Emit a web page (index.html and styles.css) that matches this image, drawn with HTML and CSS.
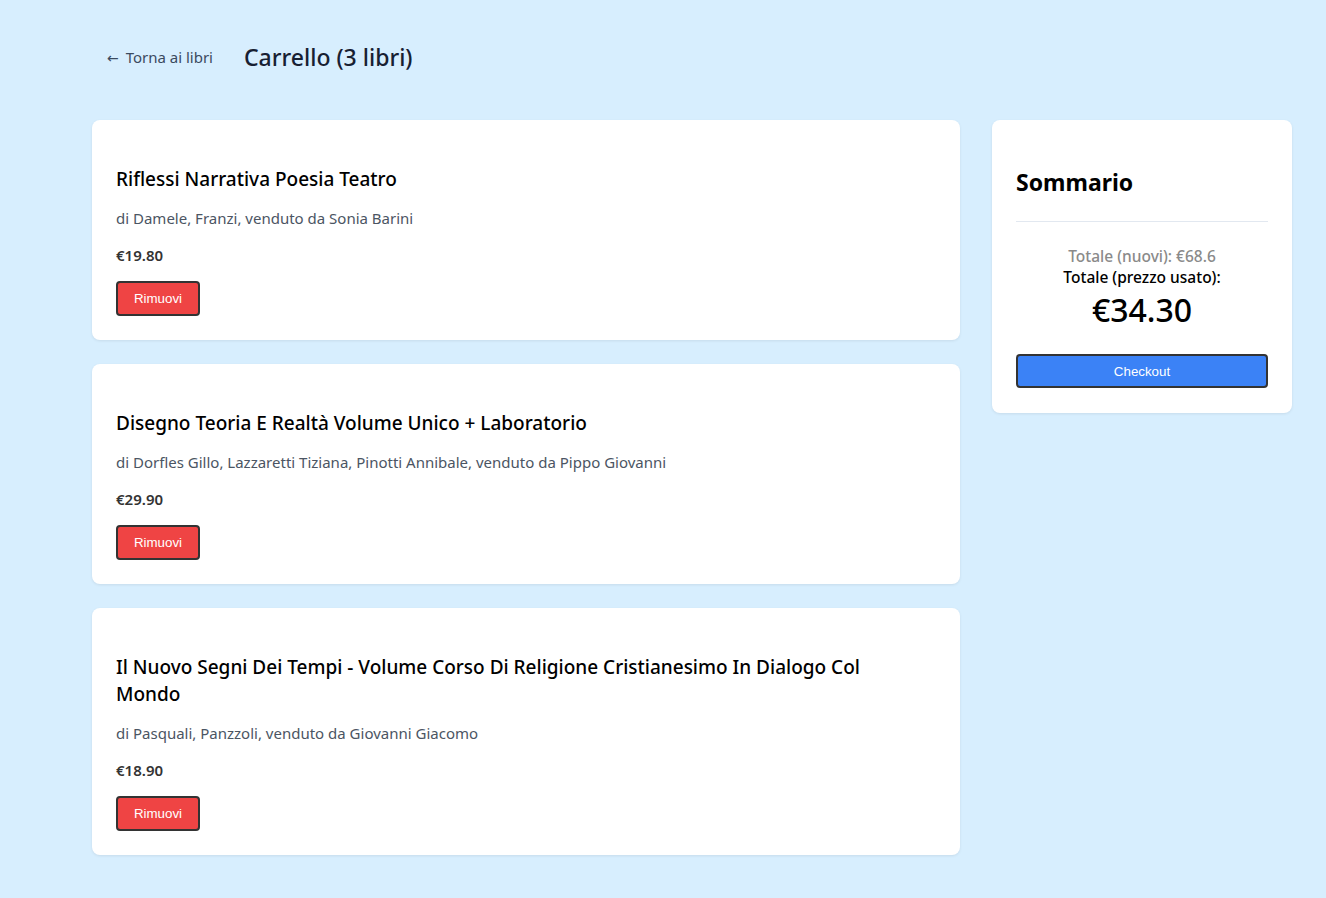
FILE: index.html
```html
<!DOCTYPE html>
<html lang="it">
<head>
<meta charset="utf-8">
<title>Carrello</title>
<link rel="stylesheet" href="styles.css">
</head>
<body>
<div class="page">
  <header class="topbar">
    <a class="back" href="#"><span class="arrow">←</span> Torna ai libri</a>
    <h1 class="title">Carrello (3 libri)</h1>
  </header>
  <div class="layout">
    <div class="items">
      <div class="card">
        <h3 class="book-title">Riflessi Narrativa Poesia Teatro</h3>
        <p class="meta">di Damele, Franzi, venduto da Sonia Barini</p>
        <p class="price">€19.80</p>
        <button class="btn btn-remove">Rimuovi</button>
      </div>
      <div class="card">
        <h3 class="book-title">Disegno Teoria E Realtà Volume Unico + Laboratorio</h3>
        <p class="meta">di Dorfles Gillo, Lazzaretti Tiziana, Pinotti Annibale, venduto da Pippo Giovanni</p>
        <p class="price">€29.90</p>
        <button class="btn btn-remove">Rimuovi</button>
      </div>
      <div class="card">
        <h3 class="book-title">Il Nuovo Segni Dei Tempi - Volume Corso Di Religione Cristianesimo In Dialogo Col Mondo</h3>
        <p class="meta">di Pasquali, Panzzoli, venduto da Giovanni Giacomo</p>
        <p class="price">€18.90</p>
        <button class="btn btn-remove">Rimuovi</button>
      </div>
    </div>
    <aside class="summary">
      <h2 class="summary-title">Sommario</h2>
      <hr class="divider">
      <div class="totals">
        <div class="total-new">Totale (nuovi): €68.6</div>
        <div class="total-used">Totale (prezzo usato):</div>
        <div class="total-amount">€34.30</div>
      </div>
      <button class="btn btn-checkout">Checkout</button>
    </aside>
  </div>
</div>
</body>
</html>
```
FILE: styles.css
```css
* { box-sizing: border-box; }
html, body {
  margin: 0;
  padding: 0;
}
body {
  background: #d7eefe;
  font-family: "Noto Sans", "Open Sans", sans-serif;
  color: #111;
  min-height: 898px;
}
.page {
  padding: 0 34px 40px 92px;
}
.topbar {
  display: flex;
  align-items: center;
  gap: 31px;
  height: 114px;
  margin-bottom: 6px;
  padding-left: 15px;
}
.back {
  font-size: 15px;
  color: #3b4a5e;
  text-decoration: none;
}
.arrow {
  font-family: "DejaVu Sans", sans-serif;
  font-size: 14px;
  margin-right: 3px;
}
.title {
  margin: 0;
  font-size: 23px;
  font-weight: 500;
  color: #172032;
}
.layout {
  display: grid;
  grid-template-columns: 1fr 300px;
  gap: 32px;
  align-items: start;
}
.items {
  display: flex;
  flex-direction: column;
  gap: 24px;
}
.card, .summary {
  background: #fff;
  border-radius: 8px;
  padding: 24px;
  box-shadow: 0 1px 3px rgba(0, 0, 0, 0.08);
}
.book-title {
  margin: 22px 0 0;
  padding-right: 24px;
  font-size: 19px;
  font-weight: 500;
  line-height: 27px;
  color: #000;
}
.meta {
  margin: 14px 0 0;
  font-size: 15px;
  line-height: 22px;
  color: #4b5563;
}
.price {
  margin: 15px 0 0;
  font-size: 15px;
  font-weight: 600;
  line-height: 22px;
  color: #333;
}
.btn {
  font-family: "Liberation Sans", Arial, sans-serif;
  font-size: 13.333px;
  color: #fff;
  border: 2px solid #333;
  border-radius: 4px;
  cursor: pointer;
}
.btn-remove {
  margin-top: 15px;
  width: 84px;
  height: 35px;
  background: #ef4444;
  display: block;
}
.summary {
  padding-bottom: 25px;
}
.summary-title {
  margin: 23px 0 0;
  font-size: 23px;
  font-weight: 700;
  line-height: 30px;
  color: #000;
}
.divider {
  border: 0;
  border-top: 1px solid #e2e8f0;
  margin: 24px 0 0;
}
.totals {
  text-align: center;
  margin-top: 24px;
}
.total-new {
  font-size: 15.5px;
  font-weight: 500;
  line-height: 21px;
  color: #8a8a8a;
}
.total-used {
  font-size: 15.5px;
  font-weight: 500;
  line-height: 21px;
  color: #000;
}
.total-amount {
  font-size: 32px;
  line-height: 44px;
  font-weight: 500;
  color: #000;
}
.btn-checkout {
  display: block;
  width: 100%;
  height: 34px;
  margin-top: 22px;
  background: #3b82f6;
}
```
